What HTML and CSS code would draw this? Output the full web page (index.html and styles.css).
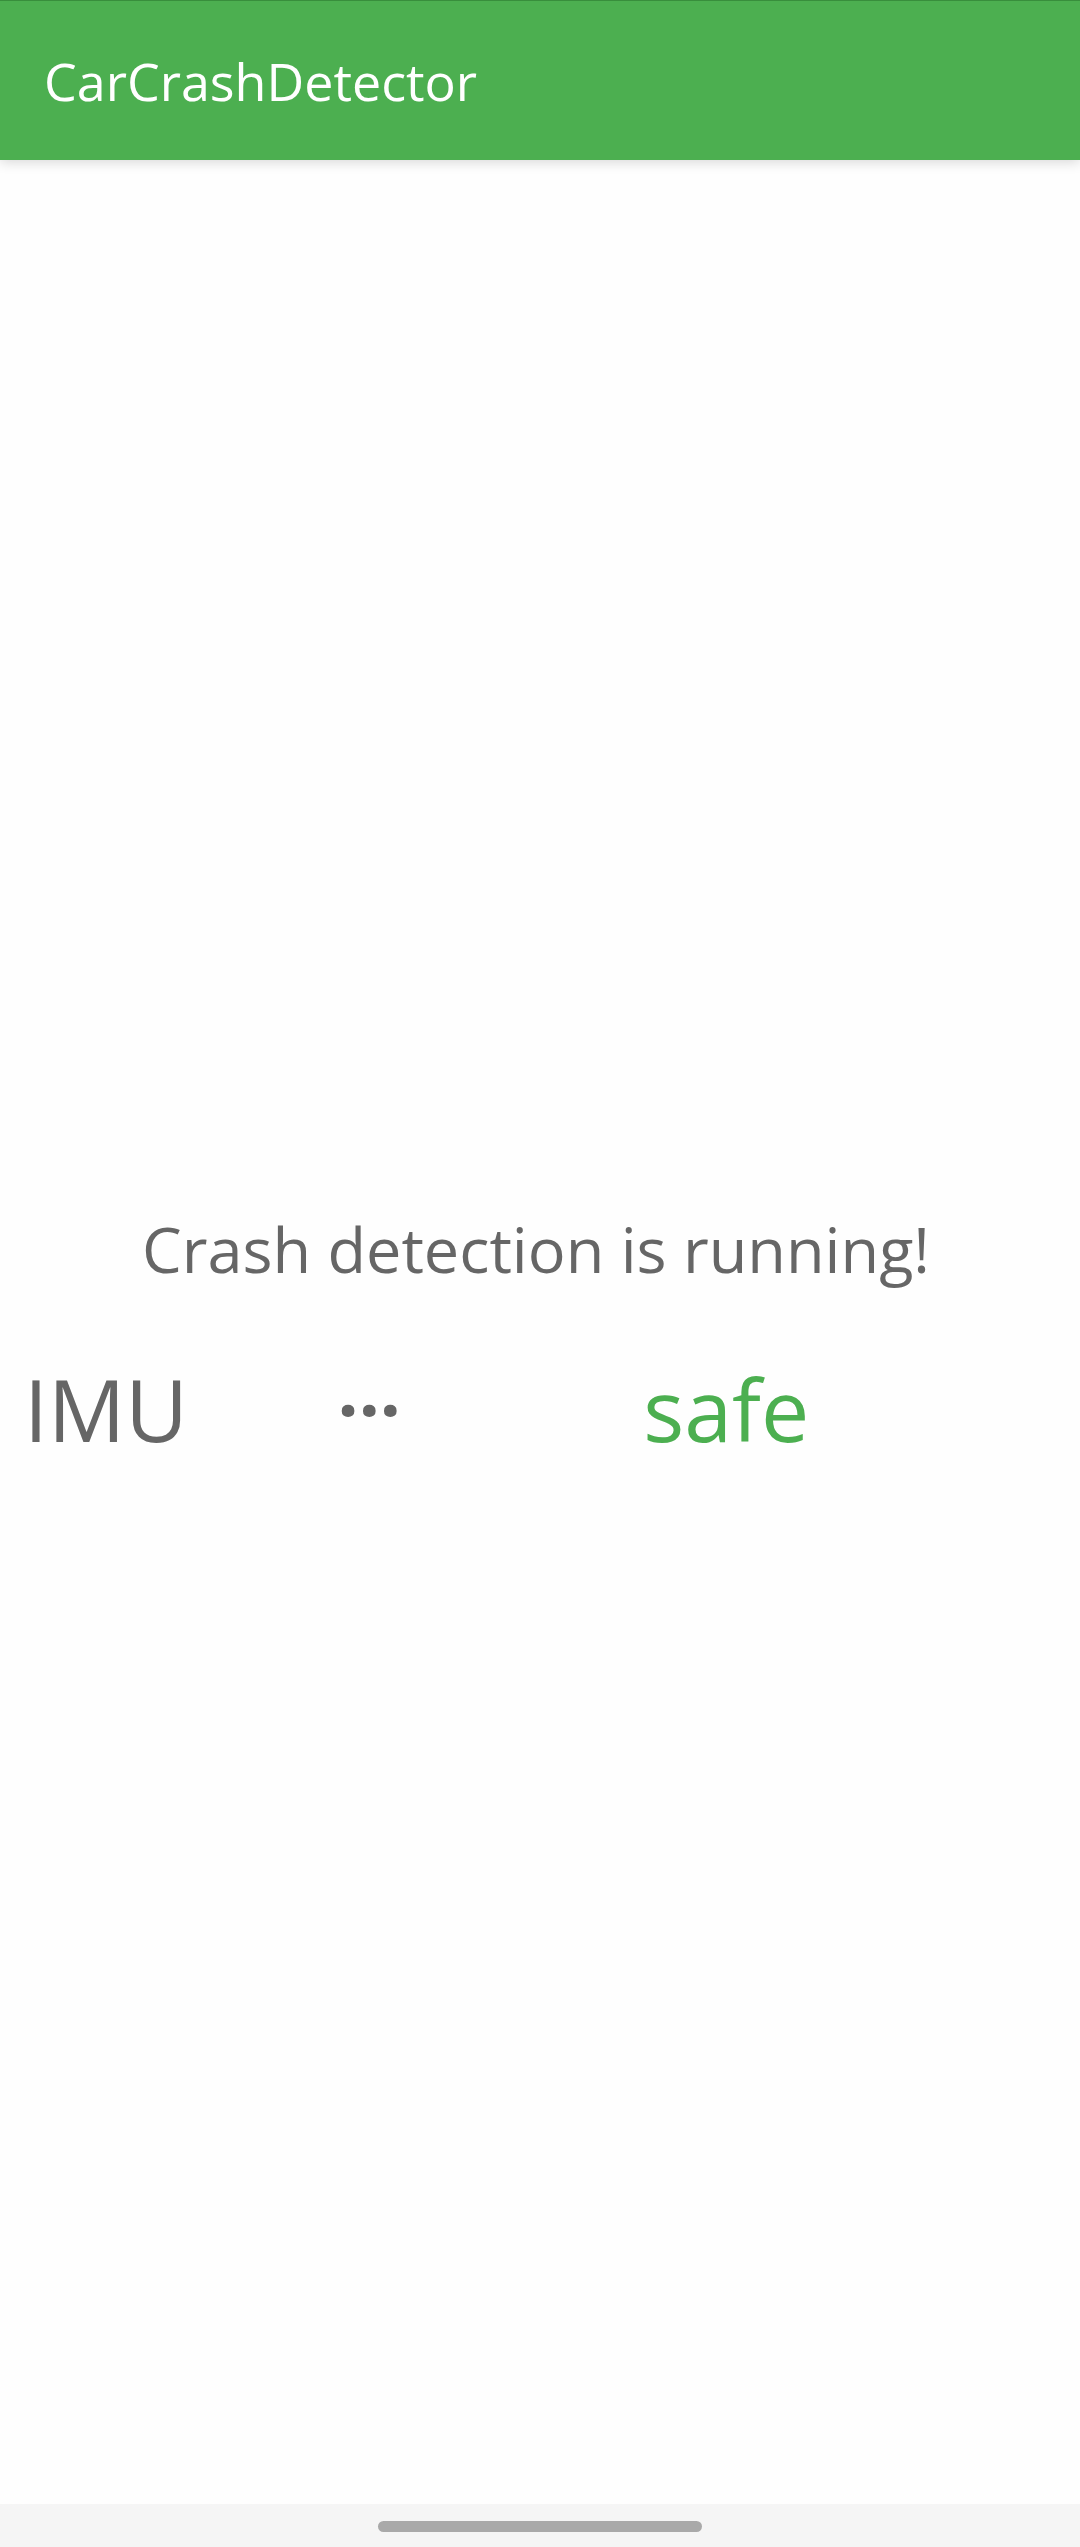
FILE: index.html
```
<!DOCTYPE html>
<html lang="en">
<head>
<meta charset="utf-8">
<meta name="viewport" content="width=device-width, initial-scale=1">
<title>CarCrashDetector</title>
<link rel="stylesheet" href="styles.css">
</head>
<body>
<header class="app-bar">
  <h1 class="app-title">CarCrashDetector</h1>
</header>
<main class="content">
  <p class="status">Crash detection is running!</p>
  <div class="readings">
    <span class="reading">IMU</span>
    <span class="reading reading-value">···</span>
    <span class="reading reading-state">safe</span>
  </div>
</main>
<footer class="nav-bar">
  <div class="nav-handle"></div>
</footer>
</body>
</html>
```

FILE: styles.css
```
* {
  box-sizing: border-box;
}

body {
  margin: 0;
  min-height: 100vh;
  display: flex;
  flex-direction: column;
  background: #fefefe;
  color: #666;
  font-family: "Open Sans", "Noto Sans", sans-serif;
}

.app-bar {
  padding: 40px 44px 39px;
  border-top: 1px solid #388e3c;
  background: #4caf50;
  box-shadow: 0 2px 12px rgba(0, 0, 0, 0.16);
}

.app-title {
  margin: 0;
  color: #fff;
  font-size: 52px;
  font-weight: 400;
  line-height: 80px;
}

.content {
  flex: 1;
  display: flex;
  flex-direction: column;
  justify-content: center;
  gap: 66px;
}

.status {
  margin: 0;
  padding-right: 8px;
  font-size: 63px;
  line-height: 88px;
  text-align: center;
}

.readings {
  display: grid;
  grid-template-columns: 3fr 3fr 4fr;
  padding: 0 24px;
}

.reading {
  font-size: 86px;
  line-height: 100px;
}

.reading-value {
  padding-left: 4px;
  font-size: 74px;
  font-weight: 700;
}

.reading-state {
  color: #4caf50;
}

.nav-bar {
  display: flex;
  justify-content: center;
  padding: 17px 0 15px;
  background: #f5f5f5;
}

.nav-handle {
  width: 30%;
  height: 11px;
  border-radius: 6px;
  background: #a9a9a9;
}
```
